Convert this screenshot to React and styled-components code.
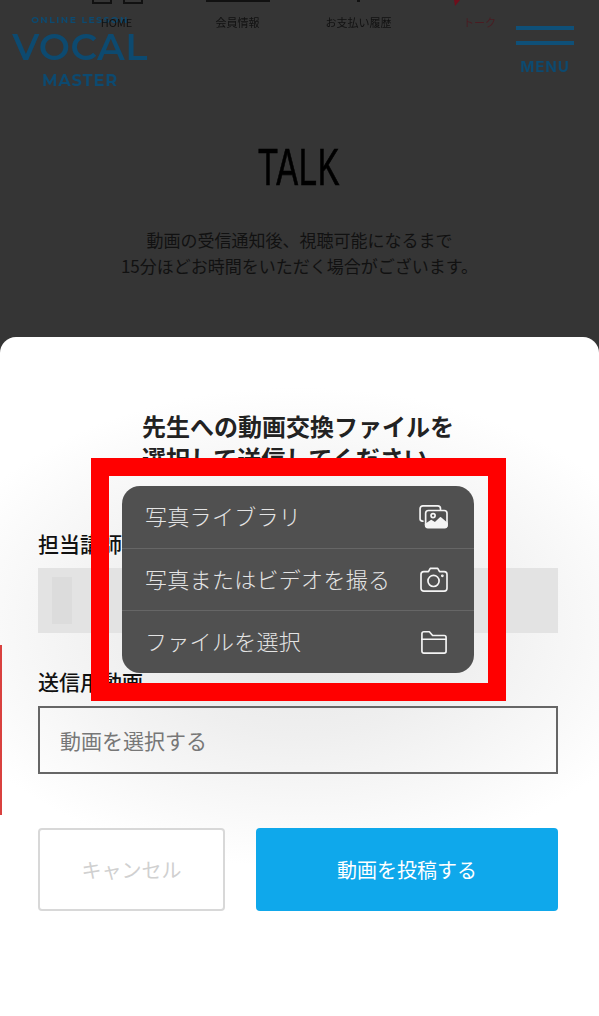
import React from 'react';
import styled, { createGlobalStyle } from 'styled-components';

const JP = `"Noto Sans CJK JP", "Noto Sans", sans-serif`;

const Global = createGlobalStyle`
html, body {
  margin: 0;
  padding: 0;
  background: #353535;
}
* { box-sizing: border-box; }
`;

const Page = styled.div`
display: flex;
flex-direction: column;
width: 599px;
height: 1016px;
overflow: hidden;
position: relative;
background: #353535;
font-family: ${JP};
`;

const Header = styled.header`
display: grid;
height: 96px;
filter: blur(0.5px);
`;

const Logo = styled.div`
grid-area: 1 / 1;
display: flex;
flex-direction: column;
align-items: center;
width: 136px;
margin: 15px 0 0 12px;
color: #0d4a70;
font-family: "Montserrat", "Inter", sans-serif;
`;

const LogoTop = styled.span`
font-size: 9px;
line-height: 10px;
letter-spacing: 1.6px;
font-weight: 700;
`;

const LogoMain = styled.span`
font-size: 37px;
line-height: 44px;
font-weight: 600;
letter-spacing: 0.5px;
`;

const LogoSub = styled.span`
font-size: 16px;
line-height: 24px;
font-weight: 700;
letter-spacing: 1px;
`;

const Nav = styled.nav`
grid-area: 1 / 1;
display: flex;
align-self: start;
margin-left: 56px;
width: 484px;
`;

const NavItem = styled.div`
width: 121px;
display: flex;
flex-direction: column;
align-items: center;
font-size: 11px;
line-height: 16px;
color: ${(props) => (props.$active ? '#4a1c22' : '#111')};
`;

const NavGlyph = styled.svg`
display: block;
width: 80px;
height: 14px;
margin-bottom: 0;
`;

const MenuButton = styled.div`
grid-area: 1 / 1;
justify-self: end;
width: 58px;
margin: 26px 25px 0 0;
display: flex;
flex-direction: column;
color: #0d4a70;
`;

const MenuLine = styled.span`
display: block;
height: 4px;
margin-bottom: 11px;
background: #0f5078;
`;

const MenuLabel = styled.span`
font-family: "Inter", sans-serif;
font-size: 15px;
line-height: 18px;
font-weight: 700;
letter-spacing: 1px;
margin-top: 2px;
text-align: center;
`;

const Intro = styled.section`
height: 241px;
display: flex;
flex-direction: column;
align-items: center;
`;

const Title = styled.h1`
margin: 43px 0 0;
font-family: "Liberation Sans", sans-serif;
font-weight: 400;
font-size: 52px;
line-height: 56px;
letter-spacing: 1px;
color: #000;
transform: scaleX(0.63);
-webkit-text-stroke: 0.7px #000;
`;

const Lead = styled.p`
margin: 32px 0 0;
font-size: 17px;
line-height: 26px;
text-align: center;
color: #111;
`;

const Sheet = styled.main`
position: relative;
flex: 1;
padding: 73px 41px 0 38px;
border-radius: 16px 16px 0 0;
background: radial-gradient(ellipse 380px 240px at 300px 290px, #e6e6e6 0%, #efefef 45%, #fff 100%);
`;

const Heading = styled.h2`
margin: 0 0 0 104px;
font-size: 24px;
line-height: 32px;
font-weight: 700;
color: #222;
`;

const FieldLabel = styled.div`
margin-top: ${(props) => props.$top}px;
font-size: 21px;
line-height: 26px;
font-weight: 500;
color: #111;
`;

const TeacherBox = styled.div`
height: 65px;
margin-top: 12px;
padding: 9px 14px;
background: #e3e3e3;
`;

const TeacherName = styled.div`
width: 20px;
height: 47px;
background: #dcdcdc;
`;

const FilePicker = styled.div`
height: 68px;
margin-top: 12px;
padding-left: 20px;
display: flex;
align-items: center;
border: 2px solid #666;
font-size: 21px;
color: #777;
`;

const Actions = styled.div`
display: flex;
gap: 31px;
margin-top: 54px;
`;

const Button = styled.div`
display: flex;
align-items: center;
justify-content: center;
height: 83px;
width: ${(props) => (props.$primary ? '302px' : '187px')};
border-radius: 4px;
font-size: 20px;
color: ${(props) => (props.$primary ? '#fff' : '#d0d0d0')};
background: ${(props) => (props.$primary ? '#0fa8eb' : '#fff')};
border: ${(props) => (props.$primary ? 'none' : '2px solid #d8d8d8')};
`;

const Callout = styled.div`
position: absolute;
left: 91px;
top: 121px;
width: 415px;
height: 243px;
padding: 10px 14px;
border: 18px solid #f00;
`;

const ActionMenu = styled.div`
width: 352px;
height: 187px;
margin-left: -1px;
border-radius: 18px;
background: #505050;
display: flex;
flex-direction: column;
`;

const ActionRow = styled.div`
flex: 1;
display: flex;
align-items: center;
justify-content: space-between;
padding: 0 25px 0 23px;
border-top: ${(props) => (props.$first ? 'none' : '1px solid #666')};
`;

const ActionLabel = styled.span`
margin-top: -4px;
font-size: 22px;
letter-spacing: 0.3px;
font-weight: 300;
color: #e4e4e4;
`;

const ActionIcon = styled.svg`
display: block;
width: 30px;
height: 26px;
fill: none;
stroke: #f4f4f4;
stroke-width: 1.8;
stroke-linejoin: round;
stroke-linecap: round;
`;

const LeftEdge = styled.div`
position: absolute;
left: 0;
top: 308px;
width: 2px;
height: 170px;
background: #d9413f;
`;

const PhotosIcon = () => (
  <ActionIcon viewBox="0 0 32 28">
    <path d="M4 18.5 H3.5 A2.5 2.5 0 0 1 1 16 V5 A3 3 0 0 1 4 2 H20 A3 3 0 0 1 23 5 V6" />
    <rect x="7" y="7" width="23" height="18" rx="3" />
    <circle cx="15" cy="12.5" r="2.2" />
    <path d="M7 22 L13 18 L17 20.5 L23 15 L30 21 V23 A2.5 2.5 0 0 1 27.5 25.5 H9.5 A2.5 2.5 0 0 1 7 23 Z" fill="#f4f4f4" />
  </ActionIcon>
);

const CameraIcon = () => (
  <ActionIcon viewBox="0 0 32 28">
    <path d="M5 5 H10 L12 1.5 H20 L22 5 H27 A3 3 0 0 1 30 8 V23 A3 3 0 0 1 27 26 H5 A3 3 0 0 1 2 23 V8 A3 3 0 0 1 5 5 Z" />
    <circle cx="15.5" cy="15" r="6" />
    <circle cx="25" cy="9.5" r="0.6" fill="#f4f4f4" />
  </ActionIcon>
);

const FolderIcon = () => (
  <ActionIcon viewBox="0 0 32 28">
    <path d="M3 24 V5 A2 2 0 0 1 5 3 H11 L14.5 7 H27 A2 2 0 0 1 29 9 V24 A2 2 0 0 1 27 26 H5 A2 2 0 0 1 3 24 Z" />
    <path d="M3 11 H29" />
  </ActionIcon>
);

const NAV = [
  { label: 'HOME', art: <><rect x="16" y="-8" width="18" height="11" fill="none" stroke="#111" strokeWidth="2" /><rect x="47" y="-8" width="18" height="11" fill="none" stroke="#111" strokeWidth="2" /></> },
  { label: '会員情報', art: <rect x="8" y="0" width="64" height="2" fill="#111" /> },
  { label: 'お支払い履歴', art: <rect x="38" y="0" width="3" height="2" fill="#111" /> },
  { label: 'トーク', art: <path d="M14 0 H20 L15 6 Z" fill="#6e0f1c" />, active: true },
];

const ACTIONS = [
  { label: '写真ライブラリ', icon: <PhotosIcon /> },
  { label: '写真またはビデオを撮る', icon: <CameraIcon /> },
  { label: 'ファイルを選択', icon: <FolderIcon /> },
];

const App = () => (
  <Page>
    <Global />
    <Header>
      <Logo>
        <LogoTop>ONLINE LESSON</LogoTop>
        <LogoMain>VOCAL</LogoMain>
        <LogoSub>MASTER</LogoSub>
      </Logo>
      <Nav>
        {NAV.map((item) => (
          <NavItem key={item.label} $active={item.active}>
            <NavGlyph viewBox="0 0 80 14">{item.art}</NavGlyph>
            {item.label}
          </NavItem>
        ))}
      </Nav>
      <MenuButton>
        <MenuLine />
        <MenuLine />
        <MenuLabel>MENU</MenuLabel>
      </MenuButton>
    </Header>
    <Intro>
      <Title>TALK</Title>
      <Lead>
        動画の受信通知後、視聴可能になるまで
        <br />
        15分ほどお時間をいただく場合がございます。
      </Lead>
    </Intro>
    <Sheet>
      <Heading>
        先生への動画交換ファイルを
        <br />
        選択して送信してください
      </Heading>
      <FieldLabel $top={56}>担当講師</FieldLabel>
      <TeacherBox>
        <TeacherName />
      </TeacherBox>
      <FieldLabel $top={35}>送信用動画</FieldLabel>
      <FilePicker>動画を選択する</FilePicker>
      <Actions>
        <Button>キャンセル</Button>
        <Button $primary>動画を投稿する</Button>
      </Actions>
      <LeftEdge />
      <Callout>
        <ActionMenu>
          {ACTIONS.map((action, i) => (
            <ActionRow key={action.label} $first={i === 0}>
              <ActionLabel>{action.label}</ActionLabel>
              {action.icon}
            </ActionRow>
          ))}
        </ActionMenu>
      </Callout>
    </Sheet>
  </Page>
);

export default App;
